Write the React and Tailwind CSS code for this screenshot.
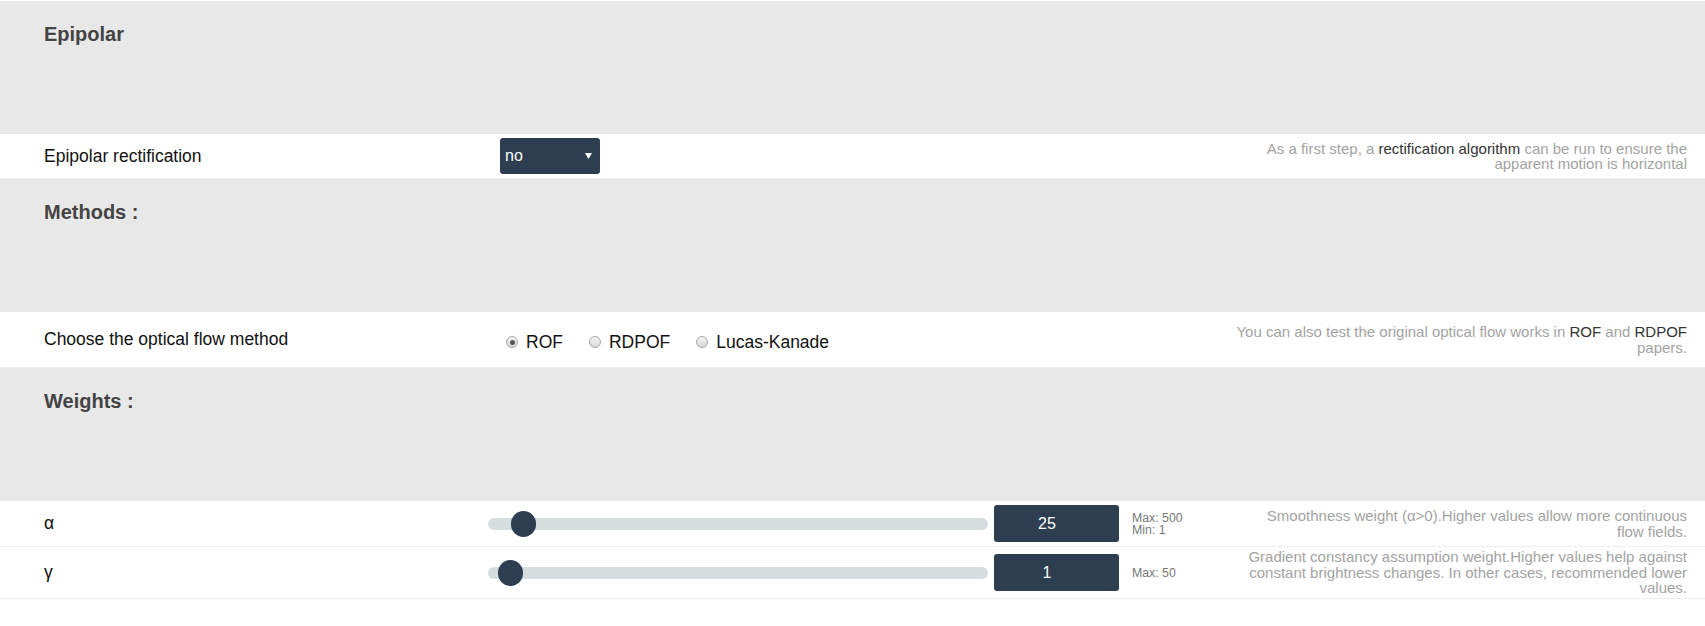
import React from "react";

const font = { fontFamily: '"Liberation Sans", Arial, Helvetica, sans-serif' };

function Band({ title }) {
  return (
    <div className="h-[133px] bg-[#e8e8e8] pl-[44px] pt-[22px]">
      <h2 className="text-[20px] leading-[22px] font-bold text-[#444444]">{title}</h2>
    </div>
  );
}

function Desc({ children }) {
  return (
    <div className="ml-auto pr-[18px] text-right text-[15px] leading-[15.5px] text-[#a3a3a3] whitespace-nowrap">
      {children}
    </div>
  );
}

function Radio({ checked, label }) {
  return (
    <div className="flex items-center gap-[8px]">
      <span className="relative flex h-[12px] w-[12px] items-center justify-center rounded-full border border-[#a8a8a8] bg-gradient-to-b from-[#f4f4f4] to-[#d6d6d6]">
        {checked && <span className="h-[5px] w-[5px] rounded-full bg-[#555555]" />}
      </span>
      <span className="text-[17.5px] leading-[20px] text-[#111111]">{label}</span>
    </div>
  );
}

function Slider({ value, min, max }) {
  const frac = (value - min) / (max - min);
  return (
    <div className="relative flex h-[26px] w-[500px] items-center">
      <div className="h-[12px] w-full rounded-full bg-[#d7dcdf]" />
      <div
        className="absolute top-0 h-[26px] w-[25px] rounded-full bg-[#2c3e50]"
        style={{ left: `${frac * 475}px` }}
      />
    </div>
  );
}

function NumBox({ value }) {
  return (
    <div className="ml-[6px] flex h-[37px] w-[125px] items-center justify-center rounded-[3px] bg-[#2c3e50] pr-[19px] text-[16px] text-white">
      {value}
    </div>
  );
}

export default function App() {
  return (
    <div className="w-[1705px] bg-white pt-px" style={font}>
      <Band title="Epipolar" />
      <div className="flex h-[45px] items-center border-b border-[#eeeeee]">
        <div className="w-[488px] pl-[44px] text-[17.5px] text-[#111111]">Epipolar rectification</div>
        <div className="ml-[12px] flex h-[36px] w-[100px] items-center justify-between rounded-[3px] bg-[#2c3e50] pl-[5px] pr-[8px] text-[16px] text-white">
          <span>no</span>
          <svg width="7" height="6" viewBox="0 0 7 6">
            <path d="M0 0 L7 0 L3.5 6 Z" fill="white" />
          </svg>
        </div>
        <Desc>
          As a first step, a <span className="text-[#333333]">rectification algorithm</span> can be run to ensure the
          <br />
          apparent motion is horizontal
        </Desc>
      </div>
      <Band title="Methods :" />
      <div className="flex h-[56px] items-center border-b border-[#eeeeee]">
        <div className="w-[488px] pl-[44px] text-[17.5px] text-[#111111]">Choose the optical flow method</div>
        <div className="ml-[18px] mt-[5px] flex items-center gap-[26px]">
          <Radio checked label="ROF" />
          <Radio label="RDPOF" />
          <Radio label="Lucas-Kanade" />
        </div>
        <Desc>
          You can also test the original optical flow works in <span className="text-[#333333]">ROF</span> and{" "}
          <span className="text-[#333333]">RDPOF</span>
          <br />
          papers.
        </Desc>
      </div>
      <Band title="Weights :" />
      <div className="flex h-[46px] items-center border-b border-[#eeeeee]">
        <div className="w-[488px] pl-[44px] text-[17.5px] text-[#111111]">α</div>
        <Slider value={25} min={1} max={500} />
        <NumBox value="25" />
        <div className="ml-[13px] text-[12.3px] leading-[12px] text-[#777777]">
          <div>Max: 500</div>
          <div>Min: 1</div>
        </div>
        <Desc>
          Smoothness weight (α&gt;0).Higher values allow more continuous
          <br />
          flow fields.
        </Desc>
      </div>
      <div className="flex h-[52px] items-center border-b border-[#eeeeee]">
        <div className="w-[488px] pl-[44px] text-[17.5px] text-[#111111]">γ</div>
        <Slider value={1} min={0} max={50} />
        <NumBox value="1" />
        <div className="ml-[13px] text-[12.3px] leading-[12px] text-[#777777]">
          <div>Max: 50</div>
        </div>
        <Desc>
          Gradient constancy assumption weight.Higher values help against
          <br />
          constant brightness changes. In other cases, recommended lower
          <br />
          values.
        </Desc>
      </div>
      <div className="h-[27px]" />
    </div>
  );
}
